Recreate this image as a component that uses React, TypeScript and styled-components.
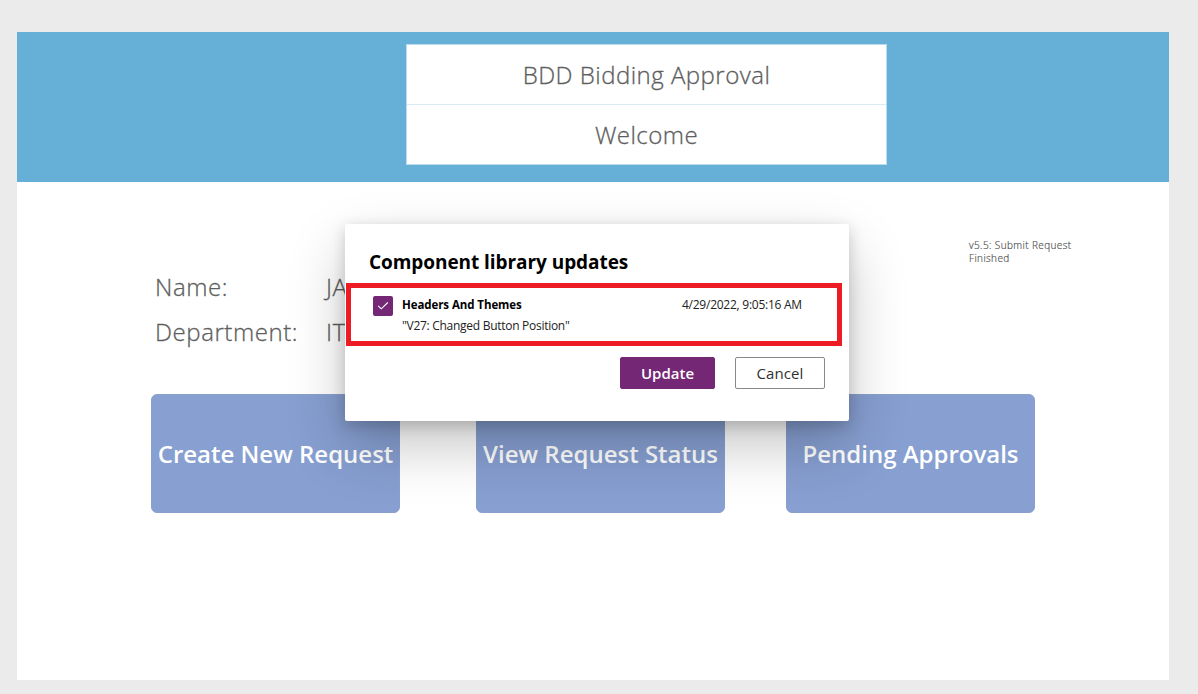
import React from "react";
import styled, { createGlobalStyle } from "styled-components";

const GlobalStyle = createGlobalStyle`
  * { box-sizing: border-box; }
  body { margin: 0; background: #ebebeb; font-family: "Open Sans", "Noto Sans", sans-serif; }
`;

const Stage = styled.div`
  height: 694px;
  padding: 32px 29px 14px 17px;
  overflow: hidden;
`;

const Screen = styled.main`
  height: 648px;
  background: #fff;
`;

const Header = styled.header`
  height: 150px;
  padding: 12px 0 0 389px;
  background: #66afd7;
`;

const TitleCard = styled.div`
  width: 481px;
  height: 121px;
  border: 1px solid #b9dcee;
  background: #fff;
`;

const TitleLine = styled.div<{ $divided?: boolean }>`
  height: ${(p) => (p.$divided ? 60 : 59)}px;
  border-bottom: ${(p) => (p.$divided ? "1px solid #d9ebf4" : "0")};
  display: flex;
  align-items: center;
  justify-content: center;
  font-size: 24px;
  letter-spacing: 0.48px;
  font-weight: 300;
  -webkit-text-stroke: 0.3px #5e5e5e;
  color: #5e5e5e;
  white-space: nowrap;
`;

const Details = styled.section`
  display: flex;
  justify-content: space-between;
  align-items: flex-start;
  height: 212px;
  padding: 57px 79px 0 138px;
`;

const Fields = styled.dl`
  display: grid;
  grid-template-columns: 171px 160px;
  grid-auto-rows: 45px;
  margin: 25px 0 0;
  font-size: 24px;
  font-weight: 300;
  line-height: 45px;
  letter-spacing: 0.58px;
  -webkit-text-stroke: 0.3px #5e5e5e;
  color: #5e5e5e;
`;

const Term = styled.dt``;

const Value = styled.dd`
  margin: 0;
`;

const Version = styled.p`
  width: 121px;
  margin: 0;
  font-size: 10px;
  line-height: 13px;
  letter-spacing: 0.4px;
  font-weight: 300;
  -webkit-text-stroke: 0.2px #555;
  color: #555;
`;

const Actions = styled.nav`
  display: grid;
  grid-template-columns: 249px 249px 249px;
  column-gap: 76px;
  padding-left: 134px;

  & > :last-child { margin-left: -15px; margin-right: 15px; }
`;

const ActionButton = styled.button`
  height: 119px;
  padding: 1px 0 0;
  border: 1px solid #8ba1cd;
  border-radius: 6px;
  background: #879fd1;
  color: #fff;
  font-family: inherit;
  font-size: 24px;
  line-height: 34px;
  font-weight: 600;
  white-space: nowrap;
`;

const Dialog = styled.section`
  position: absolute;
  left: 345px;
  top: 224px;
  width: 504px;
  height: 197px;
  padding: 23px 24px 0;
  border-radius: 2px;
  background: #fff;
  box-shadow: 0 25.6px 57.6px rgba(0, 0, 0, 0.22), 0 4.8px 14.4px rgba(0, 0, 0, 0.18);
  color: #000;
  font-family: "Open Sans", "Noto Sans", sans-serif;
`;

const DialogTitle = styled.h2`
  margin: 0;
  font-size: 19px;
  line-height: 30px;
  font-weight: 700;
  letter-spacing: -0.06px;
  white-space: nowrap;
`;

const UpdateRow = styled.div`
  display: grid;
  grid-template-columns: 29px 280px 1fr;
  height: 63px;
  margin: 6px -17px 0 -23px;
  padding: 6px 0 0 22px;
  border: 5px solid #ed1c24;
  font-size: 12px;
  line-height: 21px;
  white-space: nowrap;
`;

const Checkbox = styled.span`
  display: flex;
  align-items: center;
  justify-content: center;
  width: 20px;
  height: 20px;
  margin-top: 2px;
  border-radius: 2px;
  background: #742774;
`;

const LibraryName = styled.div`
  font-size: 11.5px;
  font-weight: 700;
  letter-spacing: -0.08px;
`;

const LibraryNote = styled.div`
  letter-spacing: -0.28px;
  color: #222;
`;

const Timestamp = styled.time`
  letter-spacing: -0.25px;
  color: #222;
`;

const DialogFooter = styled.footer`
  display: flex;
  justify-content: flex-end;
  gap: 20px;
  margin-top: 11px;
`;

const DialogButton = styled.button<{ $primary?: boolean }>`
  width: ${(p) => (p.$primary ? 95 : 90)}px;
  height: 32px;
  padding: 0;
  border: 1px solid ${(p) => (p.$primary ? "#742774" : "#8a8886")};
  border-radius: 2px;
  background: ${(p) => (p.$primary ? "#742774" : "#fff")};
  color: ${(p) => (p.$primary ? "#fff" : "#323130")};
  font-family: inherit;
  font-size: 15px;
  font-weight: ${(p) => (p.$primary ? 600 : 500)};
  letter-spacing: ${(p) => (p.$primary ? 0 : 0.1)}px;
`;

export default function App() {
  return (
    <>
      <GlobalStyle />
      <Stage>
        <Screen>
          <Header>
            <TitleCard>
              <TitleLine $divided>BDD Bidding Approval</TitleLine>
              <TitleLine>Welcome</TitleLine>
            </TitleCard>
          </Header>
          <Details>
            <Fields>
              <Term>Name:</Term>
              <Value>JA</Value>
              <Term>Department:</Term>
              <Value>IT</Value>
            </Fields>
            <Version>v5.5: Submit Request Finished</Version>
          </Details>
          <Actions>
            <ActionButton>Create New Request</ActionButton>
            <ActionButton>View Request Status</ActionButton>
            <ActionButton>Pending Approvals</ActionButton>
          </Actions>
        </Screen>
      </Stage>
      <Dialog role="dialog">
        <DialogTitle>Component library updates</DialogTitle>
        <UpdateRow>
          <Checkbox>
            <svg width="12" height="10" viewBox="0 0 12 10" fill="none" stroke="#fff" strokeWidth="1.1">
              <path d="M1.2 4.8 4.3 7.8 10.8 1.5" />
            </svg>
          </Checkbox>
          <div>
            <LibraryName>Headers And Themes</LibraryName>
            <LibraryNote>"V27: Changed Button Position"</LibraryNote>
          </div>
          <Timestamp>4/29/2022, 9:05:16 AM</Timestamp>
        </UpdateRow>
        <DialogFooter>
          <DialogButton $primary>Update</DialogButton>
          <DialogButton>Cancel</DialogButton>
        </DialogFooter>
      </Dialog>
    </>
  );
}
